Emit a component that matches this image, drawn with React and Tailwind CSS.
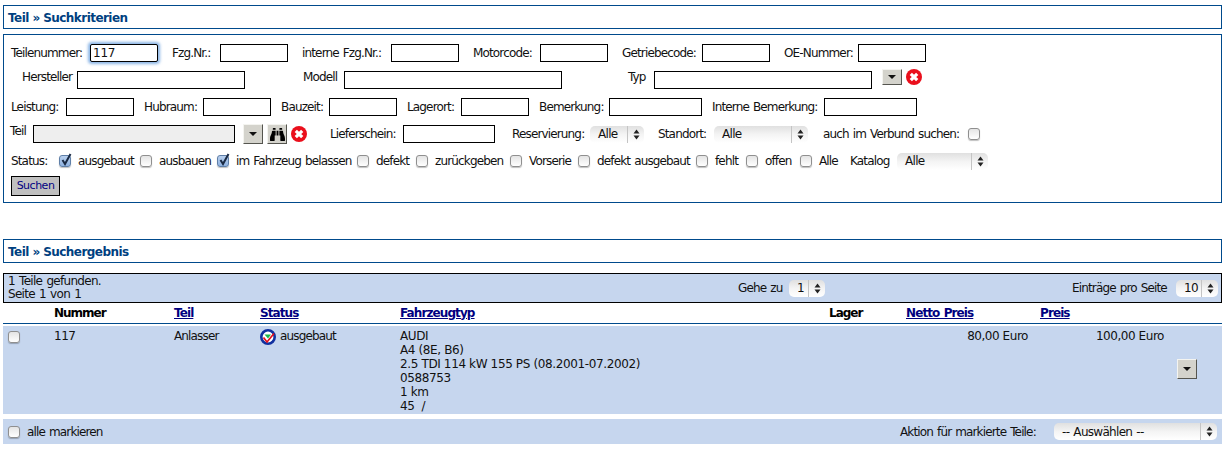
import React from "react";
import { FaBinoculars } from "react-icons/fa";

const Label = ({ w, ml = 0, up = false, children }) => (
  <span className={`whitespace-nowrap ${up ? "-translate-y-[3px]" : ""}`} style={{ width: w, marginLeft: ml }}>{children}</span>
);
const Input = ({ w = 68, ml = 0, className = "", value = "" }) => (
  <input readOnly value={value} className={`h-[18px] border border-black bg-white px-[2px] text-[12px] tracking-[-0.2px] outline-none ${className}`} style={{ width: w, marginLeft: ml }} />
);
const Check = ({ on, ml = 0 }) => (
  <span
    className={`relative inline-block h-[12px] w-[12px] shrink-0 rounded-[3px] border ${on ? "border-[#5f7fa8] bg-gradient-to-b from-[#b9d0ee] to-[#8fb2e0]" : "border-[#8f8f8f] bg-gradient-to-b from-[#e4e4e4] to-white"} shadow-[0_1px_1px_rgba(0,0,0,0.25)]`}
    style={{ marginLeft: ml }}
  >
    {on && (
      <svg viewBox="0 0 12 13" className="absolute -top-[3px] left-0 h-[13px] w-[12px]">
        <path d="M2.5 7 L5 11 L10.5 1" fill="none" stroke="#1a2a44" strokeWidth="2" />
      </svg>
    )}
  </span>
);
const Select = ({ w, ml = 0, label }) => (
  <span
    className="flex h-[17px] items-center rounded-[5px] bg-gradient-to-b from-[#e0e0e0] via-[#f4f4f4] to-white pl-[8px] text-[12px] tracking-[-0.7px]"
    style={{ width: w, marginLeft: ml }}
  >
    <span className="flex-1 whitespace-nowrap">{label}</span>
    <span className="flex h-full w-[17px] items-center justify-center border-l border-[#c4c4c4]">
      <svg viewBox="0 0 7 11" className="h-[11px] w-[7px]">
        <path d="M3.5 0.5 L6.5 4.5 H0.5 Z M3.5 10.5 L6.5 6.5 H0.5 Z" fill="#222" />
      </svg>
    </span>
  </span>
);
const DropBtn = ({ ml = 0, className = "h-[20px]" }) => (
  <span
    className={`flex w-[20px] shrink-0 items-center justify-center border border-t-[#f4f4f0] border-l-[#f4f4f0] border-r-[#55554f] border-b-[#55554f] bg-[#d4d3cc] ${className}`}
    style={{ marginLeft: ml }}
  >
    <svg viewBox="0 0 8 4" className="h-[4px] w-[8px]"><path d="M0 0 H8 L4 4 Z" fill="#111" /></svg>
  </span>
);
const XIcon = ({ ml = 0 }) => (
  <svg viewBox="0 0 16 16" className="h-[16px] w-[16px] shrink-0" style={{ marginLeft: ml }}>
    <circle cx="8" cy="8" r="8" fill="#ea0f1c" />
    <path d="M4.8 4.8 L11.2 11.2 M11.2 4.8 L4.8 11.2" stroke="#fff" strokeWidth="3.2" />
  </svg>
);
const StatusIcon = () => (
  <svg viewBox="0 0 16 16" className="h-[16px] w-[16px] shrink-0">
    <circle cx="8" cy="8" r="6.7" fill="#fff" stroke="#1030a0" strokeWidth="2.6" />
    <path d="M4.5 5.5 H11 L8 9.5 Z" fill="#19b84a" />
    <path d="M3.5 8.5 L7 13 L14 4.5" fill="none" stroke="#e2101c" strokeWidth="1.7" />
  </svg>
);
const Heading = ({ children, className = "" }) => (
  <div className={`mx-[3px] flex h-[24px] items-center border border-[#004a8c] pl-[4px] pt-[1px] text-[12px] font-bold tracking-[-0.55px] text-[#003f7f] [word-spacing:0] ${className}`}>
    {children}
  </div>
);
const Opt = ({ on, w, children }) => (
  <>
    <Check on={on} />
    <span className="ml-[7px] whitespace-nowrap" style={{ width: w }}>{children}</span>
  </>
);
const SortLink = ({ children }) => <a className="font-bold tracking-[-0.9px] text-[#000080] underline">{children}</a>;
const cols = "grid-cols-[51px_120px_86px_140px_429px_77px_134px_1fr]";

export default function App() {
  return (
    <div className="h-[457px] w-[1229px] overflow-hidden bg-white pt-[5px] pr-[4px] font-['DejaVu_Sans',sans-serif] text-[12px] leading-[14px] tracking-[-0.85px] text-[#111] [word-spacing:1px]">
      <Heading>Teil » Suchkriterien</Heading>
      <div className="mx-[3px] mt-[5px] h-[169px] border border-[#004a8c] pl-[7px] pt-[9px]">
        <div className="flex h-[18px] items-center">
          <Label w={79}>Teilenummer:</Label>
          <Input value="117" className="rounded-[2px] border-[#3a6ea8] shadow-[0_0_3px_2px_rgba(90,150,220,0.7)]" />
          <Label w={48} ml={14}>Fzg.Nr.:</Label>
          <Input />
          <Label w={89} ml={14}>interne Fzg.Nr.:</Label>
          <Input />
          <Label w={67} ml={14}>Motorcode:</Label>
          <Input />
          <Label w={80} ml={14}>Getriebecode:</Label>
          <Input />
          <Label w={74} ml={14}>OE-Nummer:</Label>
          <Input />
        </div>
        <div className="mt-[9px] flex h-[18px] items-center">
          <Label w={55} ml={11} up>Hersteller</Label>
          <Input w={168} />
          <Label w={41} ml={58} up>Modell</Label>
          <Input w={218} />
          <Label w={26} ml={66} up>Typ</Label>
          <Input w={218} />
          <DropBtn ml={10} className="h-[16px] -translate-y-[3px]" />
          <span className="-translate-y-[3px]"><XIcon ml={4} /></span>
        </div>
        <div className="mt-[9px] flex h-[18px] items-center">
          <Label w={55}>Leistung:</Label>
          <Input />
          <Label w={59} ml={10}>Hubraum:</Label>
          <Input />
          <Label w={48} ml={10}>Bauzeit:</Label>
          <Input />
          <Label w={54} ml={10}>Lagerort:</Label>
          <Input />
          <Label w={70} ml={10}>Bemerkung:</Label>
          <Input w={93} />
          <Label w={112} ml={10}>Interne Bemerkung:</Label>
          <Input w={93} />
        </div>
        <div className="mt-[9px] flex h-[18px] items-center">
          <Label w={23} ml={-1} up>Teil</Label>
          <input readOnly className="h-[18px] w-[202px] border border-black bg-[#eeeeee] outline-none" />
          <DropBtn ml={8} />
          <span className="ml-[4px] flex h-[20px] w-[20px] shrink-0 items-center justify-center border border-t-[#f4f4f0] border-l-[#f4f4f0] border-r-[#55554f] border-b-[#55554f] bg-[#d4d3cc]">
            <FaBinoculars className="h-[15px] w-[15px] text-black" />
          </span>
          <XIcon ml={4} />
          <Label w={73} ml={23}>Lieferschein:</Label>
          <Input w={92} />
          <Label w={78} ml={17}>Reservierung:</Label>
          <Select w={54} label="Alle" />
          <Label w={56} ml={14}>Standort:</Label>
          <Select w={94} label="Alle" />
          <Label w={145} ml={15}>auch im Verbund suchen:</Label>
          <Check />
        </div>
        <div className="mt-[9px] flex h-[18px] items-center">
          <Label w={48}>Status:</Label>
          <Opt on w={62}>ausgebaut</Opt>
          <Opt w={58}>ausbauen</Opt>
          <Opt on w={121}>im Fahrzeug belassen</Opt>
          <Opt w={40}>defekt</Opt>
          <Opt w={75}>zurückgeben</Opt>
          <Opt w={49}>Vorserie</Opt>
          <Opt w={99}>defekt ausgebaut</Opt>
          <Opt w={31}>fehlt</Opt>
          <Opt w={35}>offen</Opt>
          <Opt w={31}>Alle</Opt>
          <Label w={47}>Katalog</Label>
          <Select w={91} label="Alle" />
        </div>
        <button className="mt-[6px] flex h-[20px] w-[49px] items-center justify-center border border-black bg-[#c0c0c0] text-[11px] tracking-[-0.5px] text-[#000080]">
          Suchen
        </button>
      </div>

      <Heading className="mt-[36px]">Teil » Suchergebnis</Heading>

      <div className="mx-[3px] mt-[10px] flex h-[30px] items-center border border-black bg-[#c6d6ee] pl-[4px] pr-[3px]">
        <div className="flex-1 leading-[13.5px] tracking-[-0.7px]">1 Teile gefunden.<br />Seite 1 von 1</div>
        <Label w={42}>Gehe zu</Label>
        <Select w={36} ml={9} label="1" />
        <Label w={96} ml={247}>Einträge pro Seite</Label>
        <Select w={42} ml={8} label="10" />
      </div>

      <div className={`mx-[3px] grid h-[21px] ${cols} items-center border-b border-[#004a8c] pb-[1px]`}>
        <span />
        <span className="font-bold tracking-[-1px] text-black">Nummer</span>
        <SortLink>Teil</SortLink>
        <SortLink>Status</SortLink>
        <SortLink>Fahrzeugtyp</SortLink>
        <span className="font-bold tracking-[-1px] text-black">Lager</span>
        <SortLink>Netto Preis</SortLink>
        <SortLink>Preis</SortLink>
      </div>

      <div className={`mx-[3px] mt-[2px] grid h-[88px] ${cols} bg-[#c6d6ee] pt-[3px]`}>
        <span className="pl-[5px] pt-[2px]"><Check /></span>
        <span className="tracking-[-0.45px]">117</span>
        <span>Anlasser</span>
        <span className="flex gap-[4px]"><StatusIcon /><span>ausgebaut</span></span>
        <div className="whitespace-nowrap tracking-[-0.37px] [word-spacing:0]">
          AUDI<br />A4 (8E, B6)<br />2.5 TDI 114 kW 155 PS (08.2001-07.2002)<br />0588753<br />1 km<br />45 &nbsp;/
        </div>
        <span />
        <span className="-ml-[77px] w-[199px] text-right tracking-[-0.45px] [word-spacing:0]">80,00 Euro</span>
        <div className="relative">
          <span className="-ml-[2px] block w-[126px] text-right tracking-[-0.45px] [word-spacing:0]">100,00 Euro</span>
          <DropBtn className="absolute left-[137px] top-[30px] h-[20px]" />
        </div>
      </div>

      <div className="mx-[3px] mt-[5px] flex h-[25px] items-center bg-[#c6d6ee] pl-[5px] pr-[5px]">
        <Check />
        <span className="ml-[7px] flex-1">alle markieren</span>
        <Label w={140}>Aktion für markierte Teile:</Label>
        <Select w={163} ml={14} label="-- Auswählen --" />
      </div>
    </div>
  );
}
